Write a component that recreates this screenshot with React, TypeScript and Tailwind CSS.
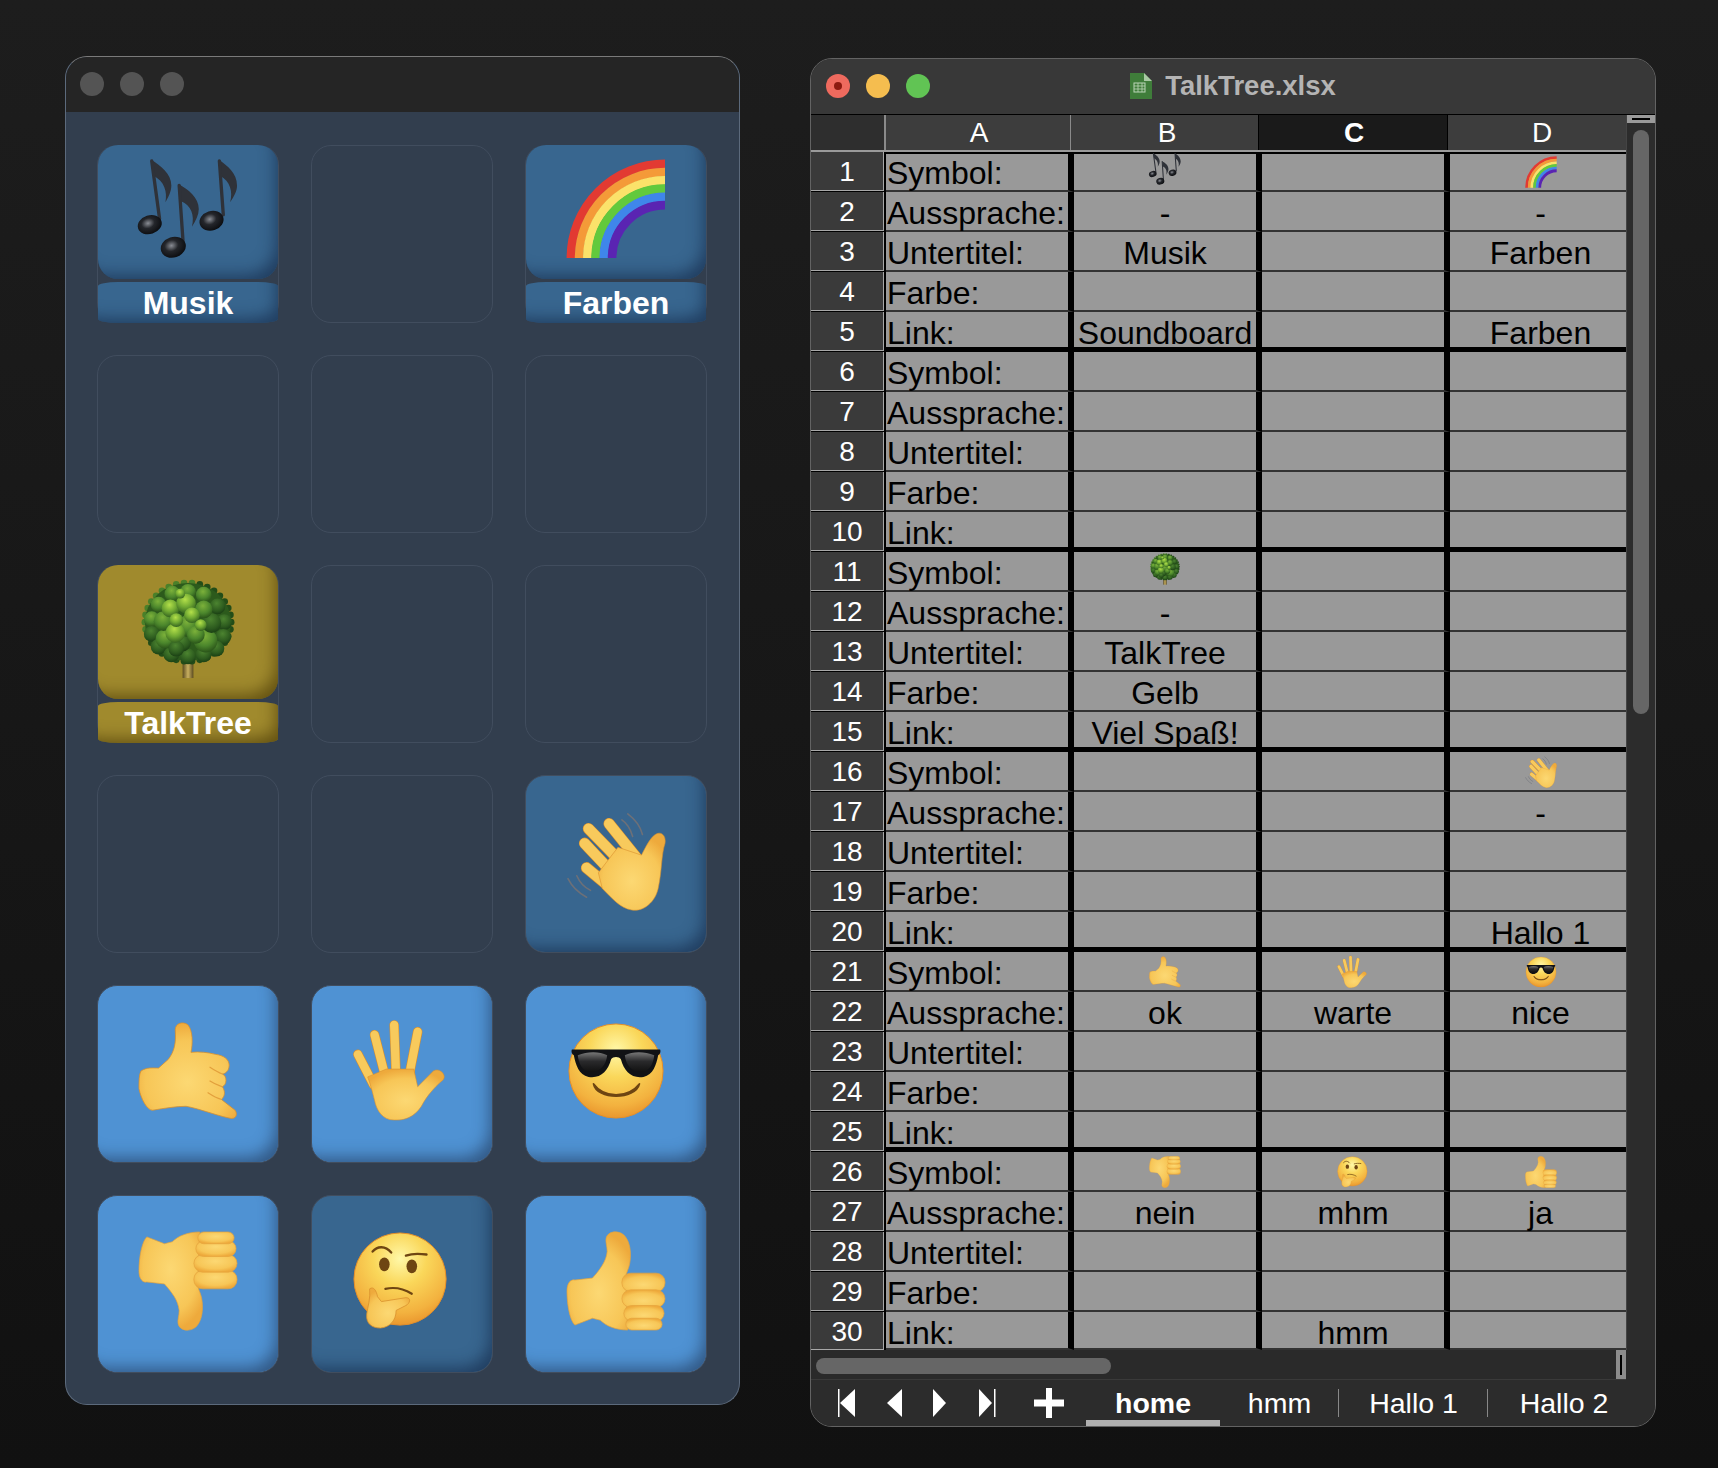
import React from "react";

type EmojiName = "music" | "rainbow" | "tree" | "wave" | "call" | "hand" | "cool" | "down" | "think" | "up";

const SKIN_OUT = "#d98f2c";
const SKIN = "#f8ca5c";

// gradients are repeated per svg, same ids with same content so it does not matter
function Defs() {
    return (
        <defs>
            <radialGradient id="skinG" cx="50%" cy="62%" r="62%">
                <stop offset="0%" stopColor="#fcd873" />
                <stop offset="70%" stopColor="#f7c657" />
                <stop offset="100%" stopColor="#eeaa3c" />
            </radialGradient>
            <radialGradient id="faceG" cx="50%" cy="28%" r="75%">
                <stop offset="0%" stopColor="#fff8a8" />
                <stop offset="38%" stopColor="#fad75a" />
                <stop offset="78%" stopColor="#f3b23f" />
                <stop offset="100%" stopColor="#e8912a" />
            </radialGradient>
            <radialGradient id="noteG" cx="45%" cy="40%" r="60%">
                <stop offset="0%" stopColor="#8a8d94" />
                <stop offset="45%" stopColor="#24262b" />
                <stop offset="100%" stopColor="#0c0d10" />
            </radialGradient>
            <linearGradient id="glassG" x1="0" y1="0" x2="0" y2="1">
                <stop offset="0%" stopColor="#777" />
                <stop offset="45%" stopColor="#2a2a2c" />
                <stop offset="100%" stopColor="#111" />
            </linearGradient>
            <linearGradient id="trunkG" x1="0" y1="0" x2="1" y2="0">
                <stop offset="0%" stopColor="#5a4a20" />
                <stop offset="50%" stopColor="#c9b060" />
                <stop offset="100%" stopColor="#5a4a20" />
            </linearGradient>
            <radialGradient id="leafLit" cx="45%" cy="30%" r="70%">
                <stop offset="0%" stopColor="#b4e04a" />
                <stop offset="55%" stopColor="#6fa832" />
                <stop offset="100%" stopColor="#356420" />
            </radialGradient>
            <radialGradient id="leafMid" cx="45%" cy="30%" r="70%">
                <stop offset="0%" stopColor="#7cb13a" />
                <stop offset="60%" stopColor="#4b862c" />
                <stop offset="100%" stopColor="#2a5419" />
            </radialGradient>
            <radialGradient id="leafDark" cx="45%" cy="30%" r="70%">
                <stop offset="0%" stopColor="#4c8430" />
                <stop offset="70%" stopColor="#2c5a1e" />
                <stop offset="100%" stopColor="#1b4014" />
            </radialGradient>
        </defs>
    );
}

// finger strokes drawn twice: outline colour first, then skin on top
function Fingers({ lines, width }: { lines: number[][]; width: number }) {
    return (
        <>
            {lines.map((l, i) => (
                <line key={"o" + i} x1={l[0]} y1={l[1]} x2={l[2]} y2={l[3]} stroke={SKIN_OUT} strokeWidth={width + 1.2} strokeLinecap="round" />
            ))}
            {lines.map((l, i) => (
                <line key={"f" + i} x1={l[0]} y1={l[1]} x2={l[2]} y2={l[3]} stroke={SKIN} strokeWidth={width} strokeLinecap="round" />
            ))}
        </>
    );
}

function Note({ stem, head, flag }: { stem: number[]; head: number[]; flag: string }) {
    return (
        <>
            <path d={flag} fill="#2f3239" />
            <line x1={stem[0]} y1={stem[1]} x2={stem[2]} y2={stem[3]} stroke="#2f3239" strokeWidth="3.4" strokeLinecap="round" />
            <ellipse cx={head[0]} cy={head[1]} rx={head[2]} ry={head[3]} fill="url(#noteG)" transform={`rotate(-18 ${head[0]} ${head[1]})`} />
        </>
    );
}

const rainbowColors = ["#e23a32", "#f49a38", "#fbe26a", "#62c93c", "#3f86ea", "#5a24b2"];

// hand placed clumps for the crown, back to front: x, y, radius, shade
const treeClumps: [number, number, number, string][] = [
    [50, 12, 8, "leafMid"], [34, 14, 8, "leafMid"], [66, 15, 8, "leafMid"], [20, 25, 8, "leafMid"], [80, 27, 8, "leafDark"],
    [13, 40, 8, "leafMid"], [87, 43, 8, "leafDark"], [13, 55, 8, "leafDark"], [86, 58, 8, "leafDark"], [20, 68, 8, "leafDark"],
    [79, 70, 8, "leafDark"], [33, 76, 8, "leafDark"], [50, 78, 8, "leafDark"], [66, 76, 8, "leafDark"],
    [27, 60, 10, "leafMid"], [44, 64, 9, "leafDark"], [68, 62, 12, "leafMid"], [38, 70, 8, "leafDark"],
    [25, 42, 10, "leafMid"], [74, 44, 10, "leafDark"], [50, 47, 11, "leafMid"], [37, 54, 10, "leafLit"],
    [58, 56, 9, "leafMid"], [32, 29, 9, "leafLit"], [66, 30, 9, "leafMid"], [48, 24, 10, "leafLit"],
    [38, 41, 7, "leafLit"], [54, 36, 8, "leafLit"], [63, 46, 6, "leafLit"], [42, 14, 5, "leafLit"],
];

// little bumps round the crown edge
const treeEdge = Array.from({ length: 34 }, (_, i) => {
    const a = (i / 34) * Math.PI * 2;
    return [50 + Math.cos(a) * 44, 43 + Math.sin(a) * 40];
});

function Tree() {
    return (
        <>
            <rect x="44.5" y="80" width="11" height="20" fill="url(#trunkG)" />
            {treeEdge.map((p, i) => (
                <circle key={"e" + i} cx={p[0]} cy={p[1]} r="3.4" fill={p[0] > 55 || p[1] > 60 ? "#234d18" : "#4a8029"} />
            ))}
            <ellipse cx="50" cy="43" rx="44" ry="40" fill="#2c5a1c" />
            {treeClumps.map((c, i) => (
                <circle key={i} cx={c[0]} cy={c[1]} r={c[2]} fill={`url(#${c[3]})`} />
            ))}
        </>
    );
}

function ThumbShape() {
    return (
        <g fill="url(#skinG)" stroke="#e4a23c" strokeWidth="0.7">
            <path d="M0 60C0 52 4 48 8 49L26 47C34 38 40 30 41 20C41 14 39 10 40 6C42 -1 52 -2 58 3C64 9 66 20 64 32C63 38 60 42 60 46L62 100C50 100 40 96 34 90L26 88L8 95C3 90 0 75 0 60Z" />
            <rect x="56" y="42" width="44" height="19" rx="9" />
            <rect x="56" y="59" width="44" height="18" rx="9" />
            <rect x="58" y="75" width="41" height="16" rx="8" />
            <rect x="60" y="88" width="37" height="12" rx="6" />
        </g>
    );
}

function Emoji({ name, size }: { name: EmojiName; size: number }) {
    return (
        <svg width={size} height={size} viewBox="-1 -1 102 102" className="shrink-0 overflow-visible">
            <Defs />
            {name === "music" && (
                <>
                    <Note stem={[13, 1, 21, 60]} head={[11, 66, 12.5, 9.5]} flag="M13 0C22 6 33 14 33 26C33 32 30 38 27 43C29 32 26 22 15 16Z" />
                    <Note stem={[41, 26, 45, 84]} head={[35, 89, 13, 10.5]} flag="M41 25C50 30 61 38 61 50C61 56 58 62 54 68C57 56 53 46 43 42Z" />
                    <Note stem={[82, 1, 86, 56]} head={[74, 62, 12.5, 10]} flag="M82 0C90 6 100 13 100 26C100 32 97 37 93 43C96 32 93 22 83 16Z" />
                </>
            )}
            {name === "rainbow" &&
                rainbowColors.map((c, i) => {
                    const r = 96 - i * 8.4;
                    return <path key={c} d={`M${100 - r} 100A${r} ${r} 0 0 1 100 ${100 - r}`} fill="none" stroke={c} strokeWidth="8.8" />;
                })}
            {name === "tree" && <Tree />}
            {name === "wave" && (
                <>
                    <g stroke="#6d7078" strokeWidth="1.6" fill="none" strokeLinecap="round">
                        <path d="M62 2C70 8 75 15 77 23" />
                        <path d="M56 8C62 12 65 18 67 25" />
                        <path d="M1 68C5 76 11 82 20 87" />
                        <path d="M10 65C13 72 18 77 24 80" />
                    </g>
                    <Fingers lines={[[22, 17, 56, 52], [43, 12, 72, 48], [18, 32, 50, 66], [20, 57, 50, 82]]} width={10.5} />
                    <path d="M32 62L52 36L76 44C80 36 86 24 92 22C98 20 101 26 100 32C96 44 97 60 93 78C90 92 78 102 66 100C54 98 46 88 36 78Z" fill="url(#skinG)" stroke={SKIN_OUT} strokeWidth="0.6" />
                </>
            )}
            {name === "call" && (
                <g fill="url(#skinG)" stroke={SKIN_OUT} strokeWidth="0.8">
                    <path d="M2 50C8 46 14 47 20 47L30 38C36 30 38 22 37 8C37 1 45 -1 50 3C55 9 55 22 53 31C62 30 70 31 78 33C86 34 92 38 92 44C92 50 88 53 85 53C90 55 90 64 85 66C88 70 88 76 84 79L98 90C101 94 99 100 92 98C78 95 60 88 48 86C38 86 26 88 14 90C8 90 2 78 0 68C0 60 0 54 2 50Z" />
                    <path d="M72 46C78 50 82 52 85 53M72 60C78 64 82 65 85 66M70 72C76 76 80 78 84 79" fill="none" stroke="#e3a03c" strokeWidth="1.2" />
                </g>
            )}
            {name === "hand" && (
                <>
                    <Fingers lines={[[5, 33, 21, 64], [22, 13, 33, 56], [42, 3, 44, 56], [66, 10, 57, 56]]} width={8.5} />
                    <path d="M15 56L34 48L62 48L66 66L82 50C88 46 96 54 92 59C86 64 78 72 72 82C66 94 56 101 42 100C30 100 24 90 22 80C20 72 18 64 15 56Z" fill="url(#skinG)" stroke={SKIN_OUT} strokeWidth="0.6" />
                </>
            )}
            {name === "cool" && (
                <>
                    <circle cx="50" cy="50" r="48" fill="url(#faceG)" stroke="#e58e28" strokeWidth="1" />
                    <path d="M5 28L95 28C96 30 95 33 93 34C91 44 88 54 78 56C66 58 58 50 55 38C53 35 47 35 45 38C42 50 34 58 22 56C12 54 9 44 7 34C5 33 4 30 5 28Z" fill="#111215" />
                    <path d="M11 34C21 30 33 30 41 34C40 44 34 51 24 51C15 50 12 42 11 34ZM59 34C67 30 79 30 89 34C88 42 85 50 76 51C66 51 60 44 59 34Z" fill="url(#glassG)" />
                    <path d="M27 63C38 78 62 78 74 63C70 80 30 80 27 63Z" fill="#6e4512" stroke="#6e4512" strokeWidth="1.6" strokeLinejoin="round" />
                </>
            )}
            {name === "up" && <ThumbShape />}
            {name === "down" && (
                <g transform="matrix(1 0 0 -1 0 100)">
                    <ThumbShape />
                </g>
            )}
            {name === "think" && (
                <>
                    <circle cx="48" cy="48" r="47" fill="url(#faceG)" stroke="#e58e28" strokeWidth="1" />
                    <path d="M20 20C25 14 33 14 39 21" fill="none" stroke="#6e4512" strokeWidth="2.4" strokeLinecap="round" />
                    <path d="M54 24C60 22 68 22 75 23" fill="none" stroke="#6e4512" strokeWidth="2.4" strokeLinecap="round" />
                    <ellipse cx="32" cy="33" rx="5.4" ry="7" fill="#6e4512" />
                    <ellipse cx="60" cy="35" rx="5.4" ry="7" fill="#6e4512" />
                    <path d="M33 58C42 56 52 58 60 63" fill="none" stroke="#6e4512" strokeWidth="2.2" strokeLinecap="round" />
                    <path d="M17 58C21 55 24 60 25 66L29 71L54 67C60 67 58 73 54 75L44 80C44 90 38 97 28 98C20 98 13 94 14 84C15 76 18 68 17 58Z" fill="url(#skinG)" stroke={SKIN_OUT} strokeWidth="0.8" />
                </>
            )}
        </svg>
    );
}

type Tile = { emoji?: EmojiName; label?: string; tone?: "dark" | "light" | "gold" };

const tiles: Tile[] = [
    { emoji: "music", label: "Musik", tone: "dark" },
    {},
    { emoji: "rainbow", label: "Farben", tone: "dark" },
    {},
    {},
    {},
    { emoji: "tree", label: "TalkTree", tone: "gold" },
    {},
    {},
    {},
    {},
    { emoji: "wave", tone: "dark" },
    { emoji: "call", tone: "light" },
    { emoji: "hand", tone: "light" },
    { emoji: "cool", tone: "light" },
    { emoji: "down", tone: "light" },
    { emoji: "think", tone: "dark" },
    { emoji: "up", tone: "light" },
];

const toneClass = {
    dark: "bg-[#38668f] shadow-[inset_-12px_-14px_16px_-10px_rgba(20,40,70,0.65)]",
    light: "bg-[#4f92d3] shadow-[inset_-12px_-14px_16px_-10px_rgba(30,50,80,0.6)]",
    gold: "bg-[#a08a2d] shadow-[inset_-12px_-14px_16px_-10px_rgba(60,45,0,0.6)]",
};

function TileView({ tile }: { tile: Tile }) {
    if (!tile.emoji) {
        return <div className="h-[178px] rounded-[20px] border border-[#414d5e]" />;
    }
    const tone = toneClass[tile.tone ?? "dark"];
    if (!tile.label) {
        return (
            <div className={`h-[178px] rounded-[20px] border border-[#414d5e] flex items-center justify-center pb-[6px] ${tone}`}>
                <Emoji name={tile.emoji} size={100} />
            </div>
        );
    }
    return (
        <div className="h-[178px] rounded-[20px] border-x border-[#414d5e] flex flex-col justify-between">
            <div className={`h-[134px] rounded-[20px] flex items-center justify-center pb-[6px] ${tone}`}>
                <Emoji name={tile.emoji} size={100} />
            </div>
            <div className={`h-[41px] rounded-[20px/4px] flex items-center justify-center text-white font-bold text-[32px] ${tone}`}>{tile.label}</div>
        </div>
    );
}

function SoundboardWindow() {
    return (
        <div className="w-[675px] h-[1349px] rounded-[22px] overflow-hidden border border-[#5c6a7c] border-t-[#7a7a7a] bg-[#323e4e] flex flex-col shrink-0">
            <div className="h-[55px] bg-[#252525] flex items-center pl-[14px] pb-[2px] gap-[16px] shrink-0">
                <div className="w-[24px] h-[24px] rounded-full bg-[#545454]" />
                <div className="w-[24px] h-[24px] rounded-full bg-[#545454]" />
                <div className="w-[24px] h-[24px] rounded-full bg-[#545454]" />
            </div>
            <div className="grid grid-cols-[182px_182px_182px] gap-x-[32px] gap-y-[32px] pl-[31px] pt-[33px]">
                {tiles.map((t, i) => (
                    <TileView key={i} tile={t} />
                ))}
            </div>
        </div>
    );
}

type CellValue = string | { e: EmojiName } | undefined;
type Row = [CellValue?, CellValue?, CellValue?];

const labels = ["Symbol:", "Aussprache:", "Untertitel:", "Farbe:", "Link:"];

const rows: Record<number, Row> = {
    1: [{ e: "music" }, undefined, { e: "rainbow" }],
    2: ["-", undefined, "-"],
    3: ["Musik", undefined, "Farben"],
    5: ["Soundboard", undefined, "Farben"],
    11: [{ e: "tree" }],
    12: ["-"],
    13: ["TalkTree"],
    14: ["Gelb"],
    15: ["Viel Spaß!"],
    16: [undefined, undefined, { e: "wave" }],
    17: [undefined, undefined, "-"],
    20: [undefined, undefined, "Hallo 1"],
    21: [{ e: "call" }, { e: "hand" }, { e: "cool" }],
    22: ["ok", "warte", "nice"],
    26: [{ e: "down" }, { e: "think" }, { e: "up" }],
    27: ["nein", "mhm", "ja"],
    30: [undefined, "hmm"],
};

function cellText(n: number) {
    // row 30 is cut short by the scroll bar, the text stays where a full row would put it
    return n === 30 ? "leading-[30px] pt-[6px]" : "leading-[35px] pt-[4px]";
}

function SheetCell({ value, last, border, n }: { value: CellValue; last?: boolean; border: string; n: number }) {
    return (
        <div className={`bg-[#999999] flex items-start justify-center text-black text-[32px] ${last ? "" : "border-r-[6px] border-r-black"} ${border}`}>
            {typeof value === "string" ? <span className={cellText(n)}>{value}</span> : null}
            {value && typeof value !== "string" ? (
                <div className={value.e === "tree" || value.e === "music" ? "mt-[1px]" : "mt-[4px]"}>
                    <Emoji name={value.e} size={32} />
                </div>
            ) : null}
        </div>
    );
}

function NavIcons() {
    return (
        <svg width="226" height="30" viewBox="0 0 226 30" className="shrink-0" fill="white">
            <rect x="0" y="1" width="1.5" height="28" />
            <path d="M17 1V29L2 15Z" />
            <path d="M64 1V29L49 15Z" />
            <path d="M95 1V29L108 15Z" />
            <path d="M141 1V29L154 15Z" />
            <rect x="156" y="1" width="1.5" height="28" />
            <rect x="196" y="11.5" width="30" height="7" />
            <rect x="208" y="0" width="6" height="30" />
        </svg>
    );
}

function SheetWindow() {
    return (
        <div className="w-[846px] h-[1369px] rounded-[22px] overflow-hidden border border-[#636363] bg-[#2a2a2a] flex flex-col shrink-0">
            <div className="h-[56px] shrink-0 bg-[#383838] border-b border-b-black relative flex items-center justify-center">
                <div className="absolute left-[15px] top-[15px] flex gap-[16px]">
                    <div className="w-[24px] h-[24px] rounded-full bg-[#ee6a5e] flex items-center justify-center">
                        <div className="w-[8px] h-[8px] rounded-full bg-[#8c1a10]" />
                    </div>
                    <div className="w-[24px] h-[24px] rounded-full bg-[#f5bd4f]" />
                    <div className="w-[24px] h-[24px] rounded-full bg-[#61c454]" />
                </div>
                <div className="flex items-center gap-[13px] -translate-y-[1px]">
                    <svg width="22" height="28" viewBox="0 0 22 28">
                        <path d="M0 1H14L22 9V27H0Z" fill="#3f7d3a" />
                        <path d="M14 1L22 9H14Z" fill="#a9c9a4" />
                        <rect x="4" y="11" width="11" height="9" fill="none" stroke="#bcd6b8" strokeWidth="1" />
                        <path d="M4 14H15M4 17H15M8 11V20M12 11V20" stroke="#bcd6b8" strokeWidth="0.8" />
                    </svg>
                    <span className="text-[27.5px] font-bold text-[#b4b4b4] leading-none">TalkTree.xlsx</span>
                </div>
            </div>
            <div className="flex shrink-0">
                <div className="w-[815px] overflow-hidden bg-black">
                    <div className="grid grid-cols-[73px_186px_188px_189px_190px] h-[35px] text-white text-[28px] leading-[35px]">
                        <div className="bg-[#2e2e2e]" />
                        <div className="bg-[#3d3d3d] border-l-2 border-l-[#8a8a8a] flex items-start justify-center pl-[2px]">A</div>
                        <div className="bg-[#3d3d3d] border-l border-l-[#8a8a8a] flex items-start justify-center pl-[5px]">B</div>
                        <div className="bg-[#1a1a1a] border-l border-l-black font-bold flex items-start justify-center pl-[2px]">C</div>
                        <div className="bg-[#3d3d3d] border-l border-l-black flex items-start justify-center pr-[1px]">D</div>
                    </div>
                    <div className="h-[2px] bg-[#9a9a9a]" />
                    {Array.from({ length: 30 }, (_, i) => {
                        const n = i + 1;
                        const row = rows[n] ?? [];
                        let border = "border-b-2 border-b-[#333333]";
                        if (n % 5 === 0 && n !== 30) border = "border-b-[5px] border-b-black";
                        if (n === 1) border += " shadow-[inset_0_2px_0_#000000]";
                        return (
                            <div key={n} className={`grid grid-cols-[75px_188px_188px_188px_181px] ${n === 30 ? "grid-rows-[38px]" : "grid-rows-[40px]"}`}>
                                <div className="bg-black">
                                    <div className={`${n === 30 ? "h-[38px]" : "h-[39px]"} leading-[36px] pt-[2px] w-[73px] bg-[#3a3a3a] border-b border-b-[#a8a8a8] border-r border-r-[#a8a8a8] flex items-start justify-center text-white text-[28px]`}>
                                        {n}
                                    </div>
                                </div>
                                <div className={`bg-[#999999] flex items-start pl-[1px] text-black text-[32px] border-r-[6px] border-r-black ${border}`}>
                                    <span className={cellText(n)}>{labels[i % 5]}</span>
                                </div>
                                <SheetCell n={n} value={row[0]} border={border} />
                                <SheetCell n={n} value={row[1]} border={border} />
                                <SheetCell n={n} value={row[2]} last border={border} />
                            </div>
                        );
                    })}
                </div>
                <div className="flex-1 bg-[#2c2c2c] flex flex-col items-center border-l border-l-[#444]">
                    <div className="w-full h-[8px] bg-[#9a9a9a] flex items-center justify-center">
                        <div className="w-[18px] h-[2px] bg-black" />
                    </div>
                    <div className="w-[16px] h-[584px] mt-[7px] rounded-full bg-[#666666]" />
                </div>
            </div>
            <div className="h-[30px] shrink-0 flex items-center bg-[#2a2a2a] border-b border-b-[#3a3a3a] w-[815px] relative pt-[2px]">
                <div className="ml-[5px] w-[295px] h-[16px] rounded-full bg-[#666666]" />
                <div className="absolute right-0 top-0 bottom-0 w-[10px] bg-[#8c8c8c] flex items-center justify-center">
                    <div className="w-[1.5px] h-[20px] bg-black" />
                </div>
            </div>
            <div className="h-[46px] shrink-0 flex items-stretch pl-[27px] bg-[#2c2c2c] text-white text-[28.5px] leading-[32px]">
                <div className="flex items-center">
                    <NavIcons />
                </div>
                <div className="ml-[22px] w-[134px] flex items-center justify-center font-bold border-b-[6px] border-b-[#b0b0b0] pt-[5px]">home</div>
                <div className="w-[119px] flex items-center justify-center relative pb-[1px]">
                    hmm
                    <div className="absolute right-0 top-[9px] h-[28px] w-[1.5px] bg-[#888888]" />
                </div>
                <div className="w-[149px] flex items-center justify-center relative pb-[1px]">
                    Hallo 1
                    <div className="absolute right-0 top-[9px] h-[28px] w-[1.5px] bg-[#888888]" />
                </div>
                <div className="w-[152px] flex items-center justify-center pb-[1px]">Hallo 2</div>
            </div>
        </div>
    );
}

export default function App() {
    return (
        <div className="min-h-screen bg-linear-to-b from-[#1d1d1d] to-[#111111] font-['Liberation_Sans',Arial,sans-serif] flex items-start pl-[65px] pt-[56px] gap-[70px]">
            <SoundboardWindow />
            <div className="pt-[2px]">
                <SheetWindow />
            </div>
        </div>
    );
}
